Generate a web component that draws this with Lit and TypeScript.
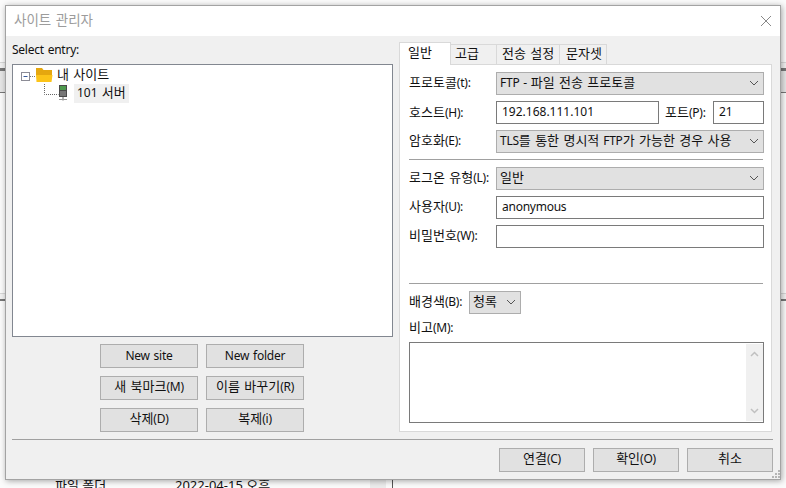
import { LitElement, html, css, svg } from "lit";
import { customElement } from "lit/decorators.js";

const chevron = svg`<svg class="chev" width="10" height="6" viewBox="0 0 10 6"><path d="M1 1l4 4 4-4" fill="none" stroke="#555" stroke-width="1"/></svg>`;

/* Hangul runs get a slightly larger size so their advance matches the reference. */
const k = (text: string) =>
  text.split(/([\uac00-\ud7a3]+(?: [\uac00-\ud7a3]+)*)/).map((part, i) =>
    i % 2 ? html`<span class="ko">${part}</span>` : part
  );

@customElement("app-root")
export class AppRoot extends LitElement {
  static styles = css`
    :host {
      display: block;
      position: relative;
      width: 786px;
      height: 488px;
      overflow: hidden;
      background: #fbfbfb;
      font: 12px/18px "Noto Sans", "Noto Sans CJK KR", sans-serif;
      letter-spacing: -0.25px;
      word-spacing: 1px;
      color: #111;
    }
    .ko { font-size: 13px; letter-spacing: 0; line-height: 16px; }
    .num { letter-spacing: 0; }
    .behind { position: absolute; inset: 0; }
    .band { position: absolute; left: 0; right: 0; }
    .b1 { top: 62px; height: 6px; background: #f2f2f2; border-top: 1px solid #d8d8d8; }
    .b2 { top: 68px; height: 3px; background: #777; }
    .b3 { top: 71px; height: 21px; background: #e6e6e6; }
    .b4 { top: 92px; height: 1px; background: #777; }
    .b5 { top: 293px; height: 6px; background: #f2f2f2; border-top: 1px solid #d8d8d8; }
    .b6 { top: 299px; height: 2px; background: #777; }
    .under { position: absolute; top: 476px; font-size: 13px; line-height: 18px; letter-spacing: 0; word-spacing: 0; }
    .u1 { left: 55px; }
    .u2 { left: 175px; }
    .u3 { position: absolute; left: 370px; top: 479px; width: 16px; height: 9px; background: #ececec; }
    .u4 { position: absolute; left: 392px; top: 479px; width: 1px; height: 9px; background: #555; }

    .dialog {
      position: absolute;
      left: 5px;
      top: 5px;
      width: 776px;
      height: 475px;
      box-sizing: border-box;
      border: 1px solid #a3a3a3;
      background: #f0f0f0;
      box-shadow: 1px 1px 6px rgba(0, 0, 0, 0.35);
      display: flex;
      flex-direction: column;
    }
    .title {
      height: 30px;
      flex: none;
      box-sizing: border-box;
      background: #fff;
      display: flex;
      align-items: center;
      justify-content: space-between;
      padding: 0 8px 1px 8px;
      color: #9c9c9c;
    }
    .title .ko { font-size: 13.5px; }
    .body {
      display: grid;
      grid-template-columns: 381px 373px;
      column-gap: 6px;
      padding: 0 0 0 6px;
      height: 396px;
      flex: none;
    }
    .left { display: flex; flex-direction: column; }
    .sel-label { height: 28px; line-height: 28px; }
    .tree {
      height: 273px;
      box-sizing: border-box;
      border: 1px solid #828790;
      background: #fff;
      padding-top: 1px;
    }
    .row { height: 18px; display: flex; align-items: center; }
    .row svg { flex: none; }
    .r1 .label { margin-left: 3px; }
    .r2 .name {
      background: #f0f0f0;
      height: 19px;
      line-height: 18px;
      padding: 0 3px;
      margin-left: 2px;
      letter-spacing: 0;
    }
    .lbtns {
      display: grid;
      grid-template-columns: 98px 98px;
      grid-auto-rows: 24px;
      gap: 8px;
      margin: 7px 0 0 88px;
    }
    button {
      font: inherit;
      color: inherit;
      letter-spacing: inherit;
      word-spacing: inherit;
      background: #e1e1e1;
      border: 1px solid #adadad;
      padding: 0 0 2px;
      margin: 0;
      box-sizing: border-box;
    }
    button.latin { padding-bottom: 0; }
    .right { display: flex; flex-direction: column; padding-top: 6px; }
    .tabs { display: flex; height: 22px; align-items: flex-end; flex: none; position: relative; z-index: 1; }
    .tab {
      height: 20px;
      box-sizing: border-box;
      border: 1px solid #d9d9d9;
      border-left: 0;
      border-bottom: 0;
      background: #f0f0f0;
      line-height: 18px;
      padding-left: 4px;
    }
    .tab.active {
      height: 23px;
      margin-bottom: -1px;
      background: #fff;
      border-left: 1px solid #d9d9d9;
      padding-left: 8px;
      line-height: 19px;
      width: 52px;
    }
    .t2 { width: 46px; }
    .t3 { width: 63px; padding-left: 5px; }
    .t4 { width: 47px; padding-left: 6px; }
    .page {
      height: 368px;
      width: 373px;
      box-sizing: border-box;
      border: 1px solid #d9d9d9;
      background: #fff;
      padding: 7px 7px 0 9px;
      display: flex;
      flex-direction: column;
    }
    .frow {
      display: grid;
      grid-template-columns: 87px 1fr;
      height: 23px;
      align-items: center;
      margin-bottom: 6px;
    }
    .frow > span { padding-bottom: 2px; white-space: nowrap; }
    .host > span { padding-bottom: 0; }
    .host { grid-template-columns: 87px 163px 54px 51px; }
    .host .plabel { padding-left: 6px; }
    .sel {
      height: 23px;
      box-sizing: border-box;
      border: 1px solid #adadad;
      background: #e1e1e1;
      display: flex;
      align-items: center;
      justify-content: space-between;
      padding: 0 4px 1px 3px;
      white-space: nowrap;
    }
    .chev { flex: none; }
    .inp {
      height: 23px;
      box-sizing: border-box;
      border: 1px solid #7a7a7a;
      background: #fff;
      line-height: 19px;
      padding-left: 5px;
    }
    .sep { height: 1px; background: #a0a0a0; width: 354px; flex: none; }
    .s1 { margin-bottom: 7px; }
    .s2 { margin-top: 29px; margin-bottom: 7px; }
    .bgrow { grid-template-columns: 60px 52px; margin-bottom: 0; }
    .memo { height: 28px; line-height: 28px; flex: none; }
    .area {
      height: 81px;
      width: 355px;
      box-sizing: border-box;
      border: 1px solid #7a7a7a;
      background: #fff;
      display: flex;
      justify-content: flex-end;
      padding: 1px 0 1px 0;
    }
    .sb {
      width: 17px;
      background: #f0f0f0;
      display: flex;
      flex-direction: column;
      justify-content: space-between;
      align-items: center;
      padding: 7px 0;
      box-sizing: border-box;
    }
    .divider { height: 1px; background: #a0a0a0; margin: 7px 7px 0 6px; flex: none; }
    .foot {
      display: flex;
      justify-content: flex-end;
      gap: 8px;
      padding: 8px 7px 0 0;
      position: relative;
    }
    .foot button { width: 86px; height: 24px; }
    .grip { position: absolute; right: 0; bottom: -6px; }
  `;

  render() {
    return html`
      <div class="behind">
        <div class="band b1"></div><div class="band b2"></div><div class="band b3"></div><div class="band b4"></div>
        <div class="band b5"></div><div class="band b6"></div>
        <div class="under u1">파일 폴더</div>
        <div class="under u2">2022-04-15 오후</div>
        <div class="u3"></div><div class="u4"></div>
      </div>
      <div class="dialog">
        <div class="title">
          <span>${k("사이트 관리자")}</span>
          <svg width="12" height="12" viewBox="0 0 12 12"><path d="M1 1l10 10M11 1L1 11" stroke="#888" stroke-width="1" fill="none"/></svg>
        </div>
        <div class="body">
          <div class="left">
            <div class="sel-label">Select entry:</div>
            <div class="tree">
              <div class="row r1">
                <svg width="41" height="18" viewBox="0 0 41 18">
                  <rect x="8.5" y="6.5" width="8" height="8" fill="#fff" stroke="#8c8c96"/>
                  <path d="M10.5 10.5h4" stroke="#3a5a9a"/>
                  <path d="M17 10.5h6" stroke="#777" stroke-dasharray="1 1"/>
                  <path d="M23 2h6l1.5 2H39v5H23z" fill="#e5a70f"/>
                  <path d="M23 9h16.5l-1 7H23.5z" fill="#fcc419"/>
                </svg>
                <span class="label">${k("내 사이트")}</span>
              </div>
              <div class="row r2">
                <svg width="59" height="18" viewBox="0 0 59 18">
                  <path d="M31.5 0v10.5h14" fill="none" stroke="#666" stroke-dasharray="1 1"/>
                  <rect x="46" y="1" width="8" height="12" fill="#4a4a4a"/>
                  <rect x="47" y="2" width="6" height="4" fill="#4e9a4e"/>
                  <rect x="47" y="7" width="6" height="5" fill="#777"/>
                  <path d="M50 13v3.5" stroke="#666"/>
                  <path d="M46 15.5h8" stroke="#9a9a9a"/>
                </svg>
                <span class="name">101 ${k("서버")}</span>
              </div>
            </div>
            <div class="lbtns">
              <button class="latin">New site</button><button class="latin">New folder</button>
              <button>${k("새 북마크")}(M)</button><button>${k("이름 바꾸기")}(R)</button>
              <button>${k("삭제")}(D)</button><button>${k("복제")}(i)</button>
            </div>
          </div>
          <div class="right">
            <div class="tabs">
              <div class="tab active">${k("일반")}</div>
              <div class="tab t2">${k("고급")}</div>
              <div class="tab t3">${k("전송 설정")}</div>
              <div class="tab t4">${k("문자셋")}</div>
            </div>
            <div class="page">
              <div class="frow"><span>${k("프로토콜")}(t):</span><div class="sel"><span>FTP - ${k("파일 전송 프로토콜")}</span>${chevron}</div></div>
              <div class="frow host"><span>${k("호스트")}(H):</span><div class="inp num">192.168.111.101</div><span class="plabel">${k("포트")}(P):</span><div class="inp num">21</div></div>
              <div class="frow"><span>${k("암호화")}(E):</span><div class="sel"><span>TLS${k("를 통한 명시적")} FTP${k("가 가능한 경우 사용")}</span>${chevron}</div></div>
              <div class="sep s1"></div>
              <div class="frow"><span>${k("로그온 유형")}(L):</span><div class="sel"><span>${k("일반")}</span>${chevron}</div></div>
              <div class="frow"><span>${k("사용자")}(U):</span><div class="inp">anonymous</div></div>
              <div class="frow"><span>${k("비밀번호")}(W):</span><div class="inp"></div></div>
              <div class="sep s2"></div>
              <div class="frow bgrow"><span>${k("배경색")}(B):</span><div class="sel"><span>${k("청록")}</span>${chevron}</div></div>
              <div class="memo">${k("비고")}(M):</div>
              <div class="area">
                <div class="sb">
                  <svg width="9" height="6" viewBox="0 0 9 6"><path d="M1 5l3.5-3.5L8 5" fill="none" stroke="#c0c0c0" stroke-width="1.5"/></svg>
                  <svg width="9" height="6" viewBox="0 0 9 6"><path d="M1 1l3.5 3.5L8 1" fill="none" stroke="#c0c0c0" stroke-width="1.5"/></svg>
                </div>
              </div>
            </div>
          </div>
        </div>
        <div class="divider"></div>
        <div class="foot">
          <button>${k("연결")}(C)</button><button>${k("확인")}(O)</button><button>${k("취소")}</button>
          <svg class="grip" width="8" height="8" viewBox="0 0 8 8" fill="#b5b5b5">
            <rect x="6" y="0" width="2" height="2"/><rect x="3" y="3" width="2" height="2"/><rect x="6" y="3" width="2" height="2"/>
            <rect x="0" y="6" width="2" height="2"/><rect x="3" y="6" width="2" height="2"/><rect x="6" y="6" width="2" height="2"/>
          </svg>
        </div>
      </div>
    `;
  }
}
